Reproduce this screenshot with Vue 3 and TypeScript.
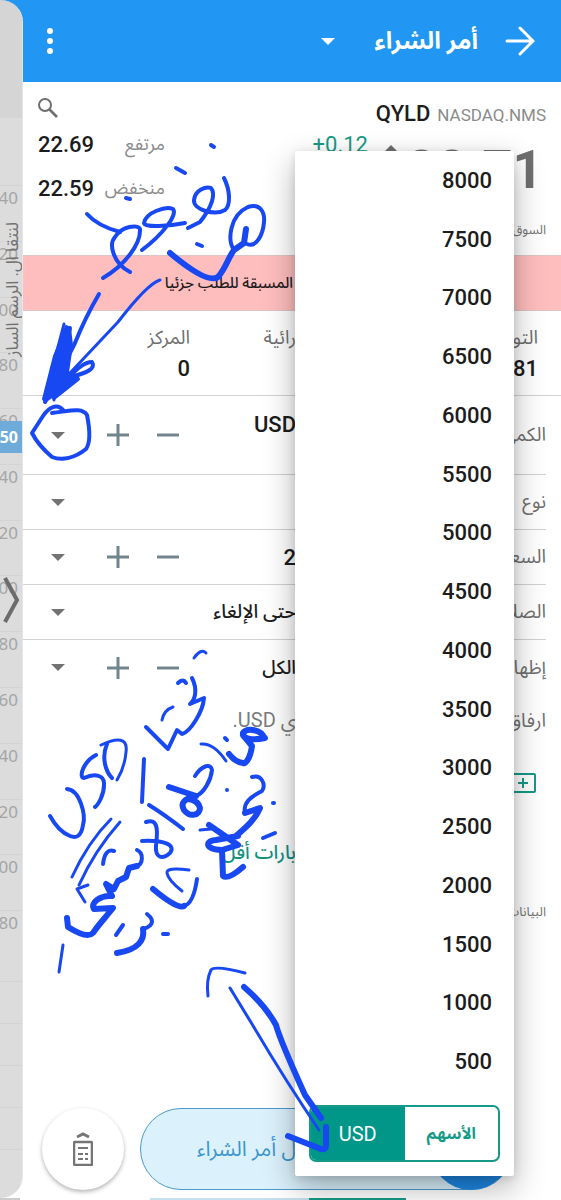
<script setup lang="ts">
import { ref } from 'vue'

interface OrderRow {
  label: string
  value: string
  stepper: boolean
  tall?: boolean
  numeric?: boolean
}

const amounts: number[] = Array.from({ length: 16 }, (_, i) => 8000 - i * 500)
const unit = ref<'usd' | 'shares'>('usd')
const ticks: string[] = ['40', '20', '00', '80', '60', '40', '20', '00', '80', '60', '40', '20', '00', '80']
const rows: OrderRow[] = [
  { label: 'الكمي', value: 'USD', stepper: true, tall: true, numeric: true },
  { label: 'نوع', value: '', stepper: false },
  { label: 'السعر', value: '2', stepper: true, numeric: true },
  { label: 'الصلا', value: 'حتى الإلغاء', stepper: false },
  { label: 'إظها', value: 'الكل', stepper: true },
]

const thin: string[] = [
  'M160 280C150 283 135 300 118 322L70 373',
  'M64 324C60 340 54 360 46 398',
  'M101 745C118 737 128 738 126 752C125 765 120 775 117 780',
  'M173 707Q164 710 162 720',
  'M201 744Q214 743 226 761',
  'M111 819Q88 842 72 877',
  'M120 822Q95 850 79 885',
  'M88 885L77 889L85 902',
  'M63 945L59 972',
  'M245 973Q215 965 211 970Q206 980 208 996',
  'M230 988L252 1024Q285 1080 319 1130',
  'M189 870Q166 867 167 873Q168 880 182 891',
  'M200 830L211 829',
  'M194 658Q201 648 206 653',
  'M55 356L54 400',
]
const medium: string[] = [
  'M87 214C95 223 105 228 120 232',
  'M96 755C84 761 78 777 84 778C95 773 105 775 104 785C104 795 98 805 95 807',
  'M263 838L275 833',
  'M211 145L214 147',
  'M176 168L185 173',
  'M224 178C230 190 231 205 225 210C215 216 193 210 194 200C195 190 206 186 211 188C216 194 212 207 200 222L188 228',
  'M185 223C170 226 144 228 144 223C146 212 166 206 173 209C178 215 162 235 142 250',
  'M126 198L130 199',
  'M130 272C114 264 108 245 115 237C122 226 138 224 140 229C141 244 125 265 103 278',
  'M197 244L202 246',
  'M234 250C227 240 230 215 248 207C260 203 265 212 264 222C263 235 256 248 247 244',
  'M99 294Q85 318 75 343L45 402',
  'M64 411C56 401 47 410 43 416L32 433C36 441 45 451 52 457C62 461 75 458 86 449C91 442 89 425 87 415C82 407 70 411 52 413',
  'M68 378C76 370 84 362 92 362C96 368 88 373 70 377',
  'M78 379L54 398',
  'M70 328L62 368',
  'M178 683Q183 678 186 683',
  'M192 678C198 690 195 700 190 704L204 698C203 712 190 732 182 734L177 730L168 749L146 727',
  'M107 744C101 758 106 772 112 778',
  'M67 789C80 790 86 815 83 825C81 838 75 838 70 836C62 833 55 825 50 816',
  'M144 759L142 802',
  'M225 738L227 740',
  'M227 790L227 790',
  'M273 803L274 803',
  'M195 776C202 765 211 763 212 770C211 780 204 793 196 796L169 787',
  'M149 805Q165 815 183 829',
  'M114 851Q105 848 103 864',
  'M146 822C158 818 158 830 156 845C155 858 162 860 170 853C176 845 165 840 142 841',
  'M252 777C262 774 266 785 262 791C250 797 243 803 245 813',
  'M137 850C144 853 143 864 137 866',
  'M197 879C194 900 188 905 184 906',
  'M123 925L116 935',
  'M163 934L168 934',
  'M147 914C157 922 150 927 143 929',
]
const thick: string[] = [
  'M246 229L244 243L234 250C228 258 226 268 218 277C211 282 195 274 170 253',
  'M265 738C255 740 242 740 243 733C247 727 262 730 264 738M243 735L252 746C250 760 245 764 243 763Q235 762 229 754',
  'M196 796L169 787M196 796C184 799 180 803 184 810C190 818 200 815 200 808C199 803 195 800 188 799',
  'M245 813L260 808C255 820 245 828 236 836M209 825L238 845L222 850C202 849 207 840 216 840L238 836',
  'M222 850L223 876Q228 880 243 867',
  'M137 866L129 868L126 877L118 881L114 889L106 884L112 896C100 895 90 903 94 909L113 908C105 918 98 925 93 933Q87 939 68 927L67 918',
  'M184 906Q178 910 153 889',
  'M143 929C145 940 138 950 117 953',
  'M244 987Q265 1005 276 1025C280 1040 290 1062 305 1095L321 1118',
  'M326 1127L326 1146Q326 1150 321 1149L288 1136',
]
</script>

<template>
  <div class="screen">
    <header class="topbar">
      <button class="icon-btn" aria-label="المزيد">
        <svg width="6" height="28" viewBox="0 0 6 28" fill="#fff"><circle cx="3" cy="4" r="3" /><circle cx="3" cy="14" r="3" /><circle cx="3" cy="24" r="3" /></svg>
      </button>
      <div class="title-group">
        <button class="icon-btn" aria-label="القائمة"><span class="caret light"></span></button>
        <h1 dir="rtl">أمر الشراء</h1>
        <button class="icon-btn" aria-label="رجوع">
          <svg width="30" height="30" viewBox="0 0 30 30" fill="none" stroke="#fff" stroke-width="3" stroke-linecap="round"><path d="M2 15H28M15 2L28 15L15 28" /></svg>
        </button>
      </div>
    </header>

    <aside class="drawer">
      <span class="vertical" dir="rtl">لنتقا ال. الرسم الساز</span>
      <ol class="scale">
        <li v-for="(t, i) in ticks" :key="i">{{ t }}</li>
      </ol>
      <div class="lines"><i v-for="n in 5" :key="n"></i></div>
      <span class="tag">50</span>
      <svg class="chevron" width="17" height="46" viewBox="0 0 17 46" fill="none" stroke="#6c6c6c" stroke-width="4"><path d="M2 1L14 23L2 45" /></svg>
    </aside>

    <main>
      <section class="quote">
        <div class="quote-side">
          <button class="icon-btn search" aria-label="بحث">
            <svg width="20" height="20" viewBox="0 0 20 20" fill="none" stroke="#6f6f6f" stroke-width="2"><circle cx="7" cy="7" r="6" /><path d="M11.500 11.500L19 19" stroke-width="2.600" /></svg>
          </button>
          <dl>
            <div><dd>22.69</dd><dt dir="rtl">مرتفع</dt></div>
            <div><dd>22.59</dd><dt dir="rtl">منخفض</dt></div>
          </dl>
        </div>
        <div class="quote-main">
          <p class="symbol"><strong>QYLD</strong> <span>NASDAQ.NMS</span></p>
          <p class="price"><span class="change">+0.12</span><span class="up"></span><b>22.71</b></p>
          <p class="market" dir="rtl">السوق</p>
        </div>
      </section>

      <p class="banner" dir="rtl">المسبقة للطلب جزئيا</p>

      <section class="summary">
        <div class="cell pos"><span dir="rtl">المركز</span><b>0</b></div>
        <div class="cell power"><span dir="rtl">رائية</span></div>
        <div class="cell avail"><span dir="rtl">التو</span><b>81</b></div>
      </section>

      <section class="rows">
        <div v-for="r in rows" :key="r.label" class="row" :class="{ tall: r.tall }">
          <button class="icon-btn drop" :aria-label="r.label"><span class="caret"></span></button>
          <div class="stepper">
            <template v-if="r.stepper">
              <button class="icon-btn" aria-label="زيادة"><svg width="22" height="22" viewBox="0 0 22 22" stroke="#73858c" stroke-width="3"><path d="M0 11H22M11 0V22" /></svg></button>
              <button class="icon-btn" aria-label="إنقاص"><svg width="22" height="22" viewBox="0 0 22 22" stroke="#73858c" stroke-width="3"><path d="M0 11H22" /></svg></button>
            </template>
          </div>
          <span class="value" :class="{ numeric: r.numeric }" dir="rtl">{{ r.value }}</span>
          <span class="label" dir="rtl">{{ r.label }}</span>
        </div>
      </section>

      <section class="attach">
        <span class="note" dir="rtl">ي USD.</span>
        <span class="label" dir="rtl">ارفاق</span>
      </section>
      <div class="card-row">
        <svg width="32" height="20" viewBox="0 0 32 20" fill="none" stroke="#159a88" stroke-width="2"><rect x="1" y="1" width="30" height="18" rx="1" /><path d="M14 10H24M19 5V15" /></svg>
      </div>
      <a class="less" href="#" dir="rtl">بارات أقل</a>
      <p class="data" dir="rtl">البيانات</p>

      <footer>
        <button class="fab" aria-label="الحاسبة">
          <svg width="20" height="34" viewBox="0 0 20 34" fill="none" stroke="#757575" stroke-width="2"><path d="M4 5L10 2L16 5" stroke-width="3" /><rect x="1" y="10" width="18" height="23" rx="1" stroke-width="2.500" /><path d="M5 16H15M5 22H10M12 22H15M5 27H10M12 27H15" /></svg>
        </button>
        <button class="submit"><span dir="rtl">ل أمر الشراء</span><i></i></button>
      </footer>
    </main>

    <div class="edge"></div>

    <div class="menu">
      <ul>
        <li v-for="a in amounts" :key="a"><button>{{ a }}</button></li>
      </ul>
      <div class="toggle">
        <button :class="{ on: unit === 'usd' }" @click="unit = 'usd'">USD</button>
        <button :class="{ on: unit === 'shares' }" dir="rtl" @click="unit = 'shares'">الأسهم</button>
      </div>
    </div>

    <svg class="ink" width="561" height="1200" viewBox="0 0 561 1200" aria-hidden="true">
      <path v-for="d in thin" :key="d" :d="d" stroke-width="3" />
      <path v-for="d in medium" :key="d" :d="d" stroke-width="4" />
      <path v-for="d in thick" :key="d" :d="d" stroke-width="6" />
      <path class="fill" d="M54 356L66 326L70 328L72 345L68 372L78 378L45 402L43 399Z" stroke-width="2" />
    </svg>
  </div>
</template>

<style>
body { margin: 0; }
</style>

<style scoped>
* { box-sizing: border-box; }
.screen {
  position: relative;
  min-height: 100vh;
  display: grid;
  grid-template-columns: 23px minmax(0, 1fr);
  grid-template-rows: 82px 1fr;
  overflow: hidden;
  background: #fff;
  color: #1c1c1c;
  font-family: Roboto, "Noto Sans Arabic", "Noto Sans", "DejaVu Sans", sans-serif;
}
button { font: inherit; color: inherit; border: 0; background: none; padding: 0; cursor: pointer; }
p, h1, dl, dd, dt, ul, ol { margin: 0; padding: 0; list-style: none; }
.icon-btn { display: flex; align-items: center; justify-content: center; }
.caret { border: 7px solid transparent; border-top-color: #737373; border-bottom: 0; }
.caret.light { border-top-color: #fff; }

.topbar {
  grid-column: 1 / 3;
  grid-row: 1;
  display: flex;
  align-items: center;
  justify-content: space-between;
  padding: 0 26px 0 47px;
  background: #2196f3;
  color: #fff;
}
.title-group { display: flex; align-items: center; }
h1 { font-size: 24px; line-height: 32px; font-weight: 700; margin: 0 27px 0 40px; }

.drawer {
  grid-column: 1;
  grid-row: 1 / 3;
  position: relative;
  display: flex;
  flex-direction: column;
  padding-top: 185px;
  margin-bottom: 2px;
  background: linear-gradient(#d5d5d5 0 118px, #dcdcdc 118px);
  border-right: 1px solid #e6e6e6;
  border-radius: 0 22px 22px 0;
  overflow: hidden;
}
.scale { height: 781px; display: grid; grid-template-columns: minmax(0, 1fr); grid-auto-rows: 1fr; }
.scale li {
  border-top: 1px solid #d3d3d3;
  font: 17px/24px "Noto Sans", sans-serif;
  color: #a5a5a5;
  direction: rtl;
  padding-right: 4px;
}
.lines { display: grid; grid-auto-rows: 42px; padding-top: 15px; }
.lines i { border-top: 1px solid #d3d3d3; }
.tag {
  position: absolute;
  top: 421px;
  right: 0;
  width: 100%;
  padding-right: 4px;
  direction: rtl;
  background: #6fabd8;
  color: #fff;
  font: 700 16px/32px "Noto Sans", sans-serif;
}
.vertical {
  position: absolute;
  top: 222px;
  right: 1px;
  writing-mode: vertical-rl;
  transform: rotate(180deg);
  font-size: 17px;
  line-height: 18px;
  color: #707070;
  white-space: nowrap;
}
.chevron { position: absolute; top: 577px; right: 2px; }

main { grid-column: 2; grid-row: 2; display: flex; flex-direction: column; }
.quote { height: 173px; display: flex; justify-content: space-between; padding: 16px 15px 0 15px; }
.search { height: 20px; }
dl { padding-top: 4px; }
dl div { display: flex; align-items: center; justify-content: space-between; width: 127px; height: 44px; }
dd { font-size: 22px; font-weight: 500; }
dt { font-size: 18px; color: #8b8b8b; }
.symbol { display: flex; align-items: baseline; justify-content: flex-end; gap: 7px; font-size: 22px; line-height: 32px; }
.symbol strong { font-weight: 500; }
.symbol span { font-size: 17px; color: #8b8b8b; }
.price { display: flex; align-items: flex-start; justify-content: flex-end; height: 86px; padding-right: 3px; color: #6f6f6f; }
.price b { font-size: 53px; line-height: 78px; font-weight: 700; }
.change { color: #159a88; font-size: 22px; line-height: 28px; margin-right: 14px; font-weight: 400; }
.up { border: 9px solid transparent; border-bottom-color: #6f6f6f; border-top: 0; margin: 14px 0 0 0; }
.price b { margin-left: 6px; }
.market { font-size: 13px; line-height: 26px; color: #757575; }

.banner {
  height: 56px;
  padding-right: 268px;
  line-height: 54px;
  font-size: 15px;
  font-weight: 500;
  white-space: nowrap;
  background: #ffbebe;
  border-top: 1px solid #dcc4c4;
  border-bottom: 1px solid #dcc4c4;
}
.summary { display: flex; height: 85px; padding: 11px 23px 0 98px; border-bottom: 1px solid #d2d2d2; font-size: 19px; }
.cell { display: flex; flex-direction: column; text-align: right; line-height: 31px; }
.cell span { color: #707070; }
.cell b { font-size: 22px; font-weight: 500; }
.pos { width: 69px; }
.power { width: 106px; }
.avail { margin-left: auto; }

.rows { padding-right: 15px; }
.row { display: flex; align-items: center; height: 55px; border-bottom: 1px solid #d2d2d2; }
.row.tall { height: 79px; }
.row:last-child { border-bottom: 0; }
.drop { width: 70px; height: 100%; }
.stepper { display: flex; gap: 28px; width: 87px; padding-left: 14px; }
.value { width: 116px; font-size: 19px; font-weight: 500; white-space: nowrap; }
.value.numeric { font-size: 22px; }
.tall .value { padding-bottom: 22px; }
.label { margin-left: auto; font-size: 19px; color: #707070; white-space: nowrap; }
.attach { display: flex; align-items: center; height: 52px; padding: 0 15px 0 0; }
.note { width: 273px; font-size: 20px; color: #7b7b7b; }
.card-row { display: flex; justify-content: flex-end; padding: 26px 25px 0 0; }
.less { width: 273px; margin-top: 44px; font-size: 19px; line-height: 32px; font-weight: 500; color: #15917f; text-decoration: none; }
.data { margin-top: 27px; padding-right: 15px; font-size: 13px; line-height: 32px; color: #757575; }

footer { display: flex; align-items: center; gap: 16px; margin-top: auto; padding: 0 48px 10px 19px; }
.fab {
  flex: none;
  display: flex;
  align-items: center;
  justify-content: center;
  width: 82px;
  height: 82px;
  border-radius: 50%;
  background: #fff;
  box-shadow: 0 2px 4px rgba(0, 0, 0, 0.3);
}
.submit {
  flex: 1;
  display: flex;
  align-items: center;
  justify-content: space-between;
  height: 82px;
  border: 1px solid #4a9acb;
  border-radius: 41px;
  background: #dbf1fc;
  color: #3d96cc;
  font-size: 21px;
}
.submit span { width: 155px; text-align: right; direction: rtl; white-space: nowrap; }
.submit i { width: 82px; height: 82px; border-radius: 50%; background: #1e88e5; }
.edge {
  position: absolute;
  inset: auto 0 0 0;
  height: 2px;
  background: linear-gradient(90deg, #ccc 0 20px, #fff 20px 150px, #c5dfec 150px 309px, #159a88 309px 406px, #fff 406px);
}

.menu {
  position: absolute;
  top: 151px;
  bottom: 24px;
  right: 47px;
  width: 219px;
  display: flex;
  flex-direction: column;
  background: #fff;
  border-radius: 2px;
  box-shadow: 0 12px 32px rgba(0, 0, 0, 0.3), 0 2px 8px rgba(0, 0, 0, 0.12);
}
.menu ul { flex: 1; display: grid; grid-auto-rows: 1fr; }
.menu li { display: flex; }
.menu li button { flex: 1; text-align: right; padding-right: 22px; font-size: 22px; font-weight: 500; }
.toggle { display: flex; height: 57px; margin: 14px; border: 2px solid #159a88; border-radius: 7px; overflow: hidden; }
.toggle button { flex: 1; font-size: 16px; font-weight: 700; color: #159a88; }
.toggle .on { background: #009788; color: #fff; font-size: 20px; font-weight: 400; }

.ink { position: absolute; top: 0; left: 0; pointer-events: none; fill: none; stroke: #1848f2; stroke-linecap: round; stroke-linejoin: round; }
.ink .fill { fill: #1848f2; }
</style>
